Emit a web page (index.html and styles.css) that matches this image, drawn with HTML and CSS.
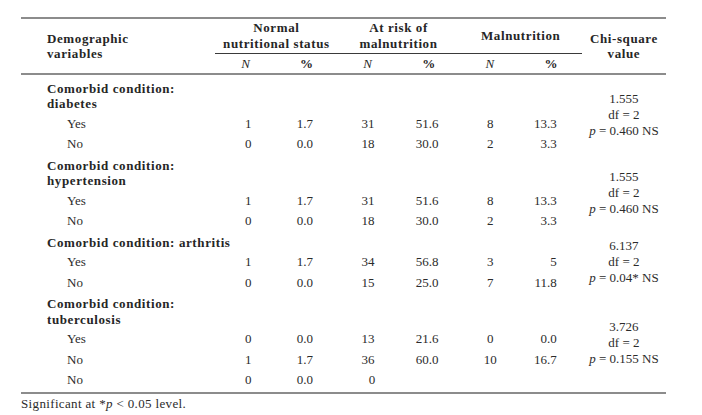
FILE: index.html
```html
<!DOCTYPE html>
<html lang="en">
<head>
<meta charset="utf-8">
<title>Comorbid conditions and nutritional status</title>
<link rel="stylesheet" href="styles.css">
</head>
<body>
<div class="page">
<table class="stats">
  <colgroup>
    <col class="c-label">
    <col class="c-num"><col class="c-num"><col class="c-num"><col class="c-num"><col class="c-num"><col class="c-num">
    <col class="c-chi">
  </colgroup>
  <thead>
    <tr class="h1">
      <th rowspan="2" class="h-var">Demographic<br>variables</th>
      <th colspan="2" class="h-group">Normal<br>nutritional status</th>
      <th colspan="2" class="h-group">At risk of<br>malnutrition</th>
      <th colspan="2" class="h-group">Malnutrition</th>
      <th rowspan="2" class="h-chi">Chi-square<br>value</th>
    </tr>
    <tr class="h2">
      <th class="h-sub"><i>N</i></th><th class="h-sub">%</th>
      <th class="h-sub"><i>N</i></th><th class="h-sub">%</th>
      <th class="h-sub"><i>N</i></th><th class="h-sub">%</th>
    </tr>
  </thead>
  <tbody>
    <tr class="grp first">
      <td class="g-label">Comorbid condition:<br>diabetes</td>
      <td></td><td></td><td></td><td></td><td></td><td></td>
      <td rowspan="3" class="chi">1.555<br>df = 2<br><i>p</i> = 0.460 NS</td>
    </tr>
    <tr class="row">
      <td class="s-label">Yes</td>
      <td class="n1">1</td><td class="p1">1.7</td><td class="n2">31</td><td class="p2">51.6</td><td class="n3">8</td><td class="p3">13.3</td>
    </tr>
    <tr class="row">
      <td class="s-label">No</td>
      <td class="n1">0</td><td class="p1">0.0</td><td class="n2">18</td><td class="p2">30.0</td><td class="n3">2</td><td class="p3">3.3</td>
    </tr>

    <tr class="grp">
      <td class="g-label">Comorbid condition:<br>hypertension</td>
      <td></td><td></td><td></td><td></td><td></td><td></td>
      <td rowspan="3" class="chi">1.555<br>df = 2<br><i>p</i> = 0.460 NS</td>
    </tr>
    <tr class="row">
      <td class="s-label">Yes</td>
      <td class="n1">1</td><td class="p1">1.7</td><td class="n2">31</td><td class="p2">51.6</td><td class="n3">8</td><td class="p3">13.3</td>
    </tr>
    <tr class="row">
      <td class="s-label">No</td>
      <td class="n1">0</td><td class="p1">0.0</td><td class="n2">18</td><td class="p2">30.0</td><td class="n3">2</td><td class="p3">3.3</td>
    </tr>

    <tr class="grp">
      <td class="g-label g-single">Comorbid condition: arthritis</td>
      <td></td><td></td><td></td><td></td><td></td><td></td>
      <td rowspan="3" class="chi">6.137<br>df = 2<br><i>p</i> = 0.04* NS</td>
    </tr>
    <tr class="row">
      <td class="s-label">Yes</td>
      <td class="n1">1</td><td class="p1">1.7</td><td class="n2">34</td><td class="p2">56.8</td><td class="n3">3</td><td class="p3">5</td>
    </tr>
    <tr class="row">
      <td class="s-label">No</td>
      <td class="n1">0</td><td class="p1">0.0</td><td class="n2">15</td><td class="p2">25.0</td><td class="n3">7</td><td class="p3">11.8</td>
    </tr>

    <tr class="grp">
      <td class="g-label">Comorbid condition:<br>tuberculosis</td>
      <td></td><td></td><td></td><td></td><td></td><td></td>
      <td rowspan="4" class="chi">3.726<br>df = 2<br><i>p</i> = 0.155 NS</td>
    </tr>
    <tr class="row">
      <td class="s-label">Yes</td>
      <td class="n1">0</td><td class="p1">0.0</td><td class="n2">13</td><td class="p2">21.6</td><td class="n3">0</td><td class="p3">0.0</td>
    </tr>
    <tr class="row">
      <td class="s-label">No</td>
      <td class="n1">1</td><td class="p1">1.7</td><td class="n2">36</td><td class="p2">60.0</td><td class="n3">10</td><td class="p3">16.7</td>
    </tr>
    <tr class="row last">
      <td class="s-label">No</td>
      <td class="n1">0</td><td class="p1">0.0</td><td class="n2 n2-single">0</td><td class="p2"></td><td class="n3"></td><td class="p3"></td>
    </tr>
  </tbody>
</table>
<p class="note">Significant at *<i>p</i> &lt; 0.05 level.</p>
</div>
</body>
</html>
```
FILE: styles.css
```css
html, body {
  margin: 0;
  padding: 0;
  background: #ffffff;
}

body {
  font-family: "Liberation Serif", "Times New Roman", serif;
  font-size: 13px;
  color: #2b2b2b;
}

.page {
  padding: 17px 0 0 21px;
}

.stats {
  border-collapse: collapse;
  table-layout: fixed;
  width: 645px;
  border-top: 2px solid #8c8c8c;
  border-bottom: 2px solid #8c8c8c;
}

.c-label { width: 194px; }
.c-num { width: 61px; }
.c-chi { width: 84px; }

.stats th,
.stats td {
  padding: 0;
}

.stats thead th {
  font-weight: bold;
  color: #262626;
  letter-spacing: 0.6px;
}

.h1 th {
  padding: 1px 0 1px;
  line-height: 16px;
  vertical-align: middle;
  text-align: center;
}

.h-group {
  border-bottom: 1px solid #3a3a3a;
}

.h1 .h-var {
  text-align: left;
  padding-left: 26px;
  line-height: 15px;
  border-bottom: 2px solid #8c8c8c;
}

.h1 .h-chi {
  line-height: 15px;
  border-bottom: 2px solid #8c8c8c;
}

.h2 th {
  line-height: 15px;
  padding: 2px 0 2px;
  font-weight: normal;
  text-align: center;
  border-bottom: 2px solid #8c8c8c;
  letter-spacing: 0;
}

.h2 i {
  font-weight: normal;
}

.grp td {
  padding: 3px 0 2.5px;
  line-height: 15.25px;
  vertical-align: top;
}

.grp.first td {
  padding-top: 5.5px;
}

.grp .g-label {
  padding-left: 26px;
  font-weight: bold;
  color: #262626;
  letter-spacing: 0.6px;
  white-space: nowrap;
}

.row td {
  padding: 3px 0;
  line-height: 14.5px;
  text-align: center;
  vertical-align: middle;
}

.row.last td {
  padding-bottom: 4.5px;
}

.row .s-label {
  text-align: left;
  padding-left: 46px;
}

.row .n1 { padding-left: 5px; }
.row .p1 { padding-right: 4px; }
.row .p2 { padding-right: 4px; }
.row .n2-single { padding-left: 8px; }
.row .p3 {
  text-align: right;
  padding-right: 25px;
}

.stats td.chi {
  padding: 0;
  text-align: center;
  vertical-align: middle;
  line-height: 16px;
}

.note {
  margin: 2px 0 0;
  line-height: 16px;
  letter-spacing: 0.35px;
}
```
